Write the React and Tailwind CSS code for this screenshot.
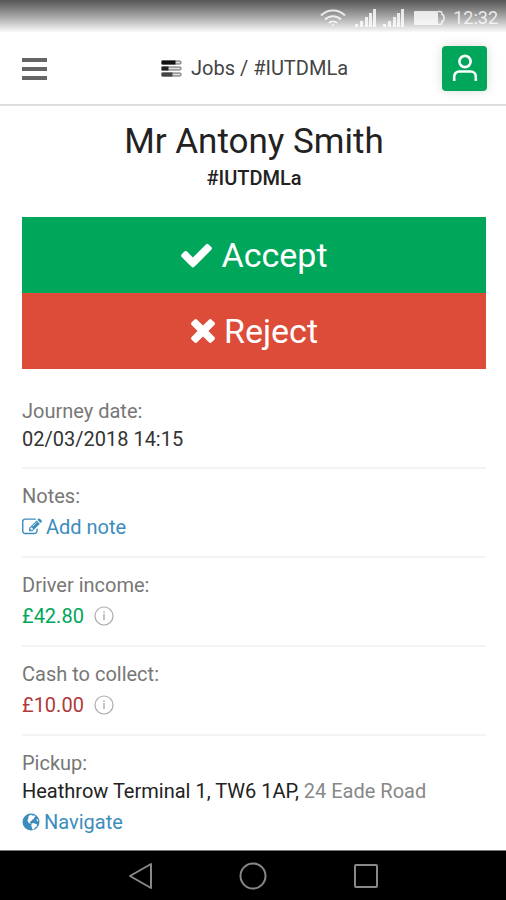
import React from "react";

const CheckIcon = () => (
  <svg viewBox="64 0 1664 1792" className="w-[33px] h-[36px]" fill="currentColor" aria-hidden="true">
    <path d="M1671 566q0 40-28 68l-724 724-136 136q-28 28-68 28t-68-28l-136-136-362-362q-28-28-28-68t28-68l136-136q28-28 68-28t68 28l294 295 656-657q28-28 68-28t68 28l136 136q28 28 28 68z" />
  </svg>
);

const TimesIcon = () => (
  <svg viewBox="256 64 1280 1792" className="w-[26px] h-[36px]" fill="currentColor" aria-hidden="true">
    <path d="M1490 1322q0 40-28 68l-136 136q-28 28-68 28t-68-28l-294-294-294 294q-28 28-68 28t-68-28l-136-136q-28-28-28-68t28-68l294-294-294-294q-28-28-28-68t28-68l136-136q28-28 68-28t68 28l294 294 294-294q28-28 68-28t68 28l136 136q28 28 28 68t-28 68l-294 294 294 294q28 28 28 68z" />
  </svg>
);

const EditIcon = () => (
  <svg viewBox="0 0 1792 1792" className="w-5 h-5" fill="currentColor" aria-hidden="true">
    <path d="M888 1184l116-116-152-152-116 116v56h96v96h56zm440-720q-16-16-33 1l-350 350q-17 17-1 33t33-1l350-350q17-17 1-33zm80 594v190q0 119-84.5 203.5t-203.5 84.5h-832q-119 0-203.5-84.5t-84.5-203.5v-832q0-119 84.5-203.5t203.5-84.5h832q63 0 117 25 15 7 18 23 3 17-9 29l-49 49q-14 14-32 8-23-6-45-6h-832q-66 0-113 47t-47 113v832q0 66 47 113t113 47h832q66 0 113-47t47-113v-126q0-13 9-22l64-64q15-15 35-7t20 29zm-96-738l288 288-672 672h-288v-288zm444 132l-92 92-288-288 92-92q28-28 68-28t68 28l152 152q28 28 28 68t-28 68z" />
  </svg>
);

const GlobeIcon = () => (
  <svg viewBox="0 0 18 18" className="w-[18px] h-[18px]" aria-hidden="true">
    <circle cx="9" cy="9" r="8.5" fill="currentColor" />
    <path
      fill="#fff"
      d="M7.500 2.200 9.500 1.700l1 1 1.600-.4 1.400 1.200-1.200 1-.3 1.300-1.700.9-1.100 1.600-1.200.1-.2 1 1.200.9-.6.500-1.800-1.100-1-1.900.1-1.700 1.200-1.200-.8-.9z"
    />
    <path fill="#fff" d="m9.800 10.400 1.800-.5 1.700.9 1.900.8-.6 1.800-1.500 1.100-1.300 1.700-1.500.4-.2-2.200-.9-1.500z" />
    <path fill="#fff" d="m14.300 6.500 1.300-.4.600 1.700-.9.600z" />
  </svg>
);

const TasksIcon = () => (
  <svg viewBox="0 0 21 17" className="w-[21px] h-[17px]" aria-hidden="true">
    <g fill="#ddd" stroke="#666" strokeWidth="1">
      <rect x="1" y="1" width="19" height="3" rx="1" />
      <rect x="1" y="7" width="19" height="3" rx="1" />
      <rect x="1" y="13" width="19" height="3" rx="1" />
    </g>
    <path fill="#111" d="M.5.500h14v4H.5z" />
    <path fill="#222" d="M.5 6.500h7v4h-7z" />
    <path fill="#444" d="M.5 12.500h11v4H.5z" />
  </svg>
);

const InfoIcon = () => (
  <svg viewBox="0 0 20 20" className="w-5 h-5" fill="none" stroke="#aaa" aria-hidden="true">
    <circle cx="10" cy="10" r="9" strokeWidth="1.2" />
    <path d="M10 8v6M10 5.500v1.500" strokeWidth="1.4" />
  </svg>
);

const PersonIcon = () => (
  <svg viewBox="0 0 26 28" className="w-[26px] h-[28px]" fill="none" stroke="#fff" strokeWidth="2.600" aria-hidden="true">
    <circle cx="13" cy="7.500" r="5.600" />
    <path d="M2.200 27v-4.500a5 5 0 0 1 5-5h11.600a5 5 0 0 1 5 5V27" />
  </svg>
);

const WifiIcon = () => (
  <svg viewBox="0 0 26 18" className="w-[26px] h-[18px]" fill="none" stroke="#fff" strokeWidth="2" aria-hidden="true">
    <path d="M1 6.500a17 17 0 0 1 24 0M5 10.500a11.500 11.500 0 0 1 16 0M9 14a6 6 0 0 1 8 0" />
    <circle cx="13" cy="16" r="1" fill="#fff" stroke="none" />
  </svg>
);

const SignalIcon = () => (
  <svg viewBox="0 0 24 18" className="w-6 h-[18px]" fill="#fff" aria-hidden="true">
    <path d="M1 15h3v3H1zM6 12h3v6H6zM11 8h3v10h-3zM15 4h3v14h-3zM19 0h3v18h-3z" />
  </svg>
);

const BatteryIcon = () => (
  <svg viewBox="0 0 31 16" className="w-[31px] h-4" aria-hidden="true">
    <rect x="0" y="1" width="24" height="14" rx="1" fill="#fff" />
    <path d="M24 1.500h2q2 0 2 3 2 0 2 3.500t-2 3.500q0 3-2 3h-2" fill="none" stroke="#fff" strokeWidth="1.500" />
  </svg>
);

const StatusBar = () => (
  <div className="h-8 pr-2 flex items-center justify-end bg-linear-to-b from-[#555] to-[#fafafa] text-white">
    <div className="flex items-center gap-2 pt-1 opacity-80">
      <WifiIcon />
      <div className="flex gap-1">
        <SignalIcon />
        <SignalIcon />
      </div>
      <BatteryIcon />
      <span className="text-[18px] leading-6">12:32</span>
    </div>
  </div>
);

const Header = () => (
  <header className="h-[74px] pl-[22px] pr-[19px] flex items-center justify-between border-b-2 border-[#ddd]">
    <button type="button" aria-label="Menu" className="w-[45px] pt-0.5 flex flex-col gap-[5px]">
      <span className="w-[25px] h-1 bg-[#666]" />
      <span className="w-[25px] h-1 bg-[#666]" />
      <span className="w-[25px] h-1 bg-[#666]" />
    </button>
    <div className="flex items-center gap-[9px] text-[20px] text-[#444]">
      <TasksIcon />
      <span>Jobs / #IUTDMLa</span>
    </div>
    <button
      type="button"
      aria-label="Profile"
      className="w-[45px] h-[45px] flex items-center justify-center rounded-[4px] bg-[#00a65a] shadow-[0_0_12px_rgba(0,0,0,0.15)]"
    >
      <PersonIcon />
    </button>
  </header>
);

const Section = ({ label, children }) => (
  <section className="pt-[13px] border-b-2 border-[#f4f4f4] last:border-b-0">
    <h2 className="leading-7 text-[#777]">{label}</h2>
    {children}
  </section>
);

const Amount = ({ value, className }) => (
  <div className="h-[34px] mb-3 flex items-center gap-[10px]">
    <span className={className}>{value}</span>
    <button type="button" aria-label="More information">
      <InfoIcon />
    </button>
  </div>
);

const NavBar = () => (
  <nav className="mt-auto h-[50px] flex items-center justify-center gap-[86px] bg-black border-t border-[#777]">
    <button type="button" aria-label="Back">
      <svg viewBox="0 0 26 28" className="w-[26px] h-7" fill="none" stroke="#888" strokeWidth="2">
        <path d="M3 14 24 2v24z" strokeLinejoin="round" />
      </svg>
    </button>
    <button type="button" aria-label="Home">
      <svg viewBox="0 0 28 28" className="w-7 h-7" fill="none" stroke="#888" strokeWidth="2">
        <circle cx="14" cy="14" r="12.500" />
      </svg>
    </button>
    <button type="button" aria-label="Recent apps">
      <svg viewBox="0 0 26 26" className="w-[26px] h-[26px]" fill="none" stroke="#888" strokeWidth="2">
        <rect x="2" y="2" width="22" height="22" rx="1" />
      </svg>
    </button>
  </nav>
);

const App = () => {
  return (
    <div className="min-h-screen flex flex-col bg-white font-[Roboto,sans-serif] text-[20px] text-[#333]">
      <StatusBar />
      <Header />
      <main className="pl-[22px] pr-5">
        <div className="pt-[15px] text-center text-[#222]">
          <h1 className="text-[35px] leading-[42px]">Mr Antony Smith</h1>
          <p className="text-[20px] leading-[30px] font-medium">#IUTDMLa</p>
        </div>
        <div className="mt-6 flex flex-col text-[34px] text-white">
          <button type="button" className="h-[76px] flex items-center justify-center gap-2 bg-[#00a65a]">
            <CheckIcon />
            Accept
          </button>
          <button type="button" className="h-[76px] flex items-center justify-center gap-2 bg-[#dd4b39]">
            <TimesIcon />
            Reject
          </button>
        </div>
        <div className="pt-[15px]">
          <Section label="Journey date:">
            <p className="mb-[14px] leading-7">02/03/2018 14:15</p>
          </Section>
          <Section label="Notes:">
            <a href="#notes" className="h-[34px] mb-3 flex items-center gap-1 text-[#3c8dbc]">
              <EditIcon />
              Add note
            </a>
          </Section>
          <Section label="Driver income:">
            <Amount value="£42.80" className="text-[#00a65a]" />
          </Section>
          <Section label="Cash to collect:">
            <Amount value="£10.00" className="text-[#b03a3a]" />
          </Section>
          <Section label="Pickup:">
            <p className="leading-7 text-[#222]">
              Heathrow Terminal 1, TW6 1AP, <span className="text-[#888]">24 Eade Road</span>
            </p>
            <a href="#navigate" className="h-[34px] mb-2 flex items-center gap-1 text-[#3c8dbc]">
              <GlobeIcon />
              Navigate
            </a>
          </Section>
        </div>
      </main>
      <NavBar />
    </div>
  );
};

export default App;
